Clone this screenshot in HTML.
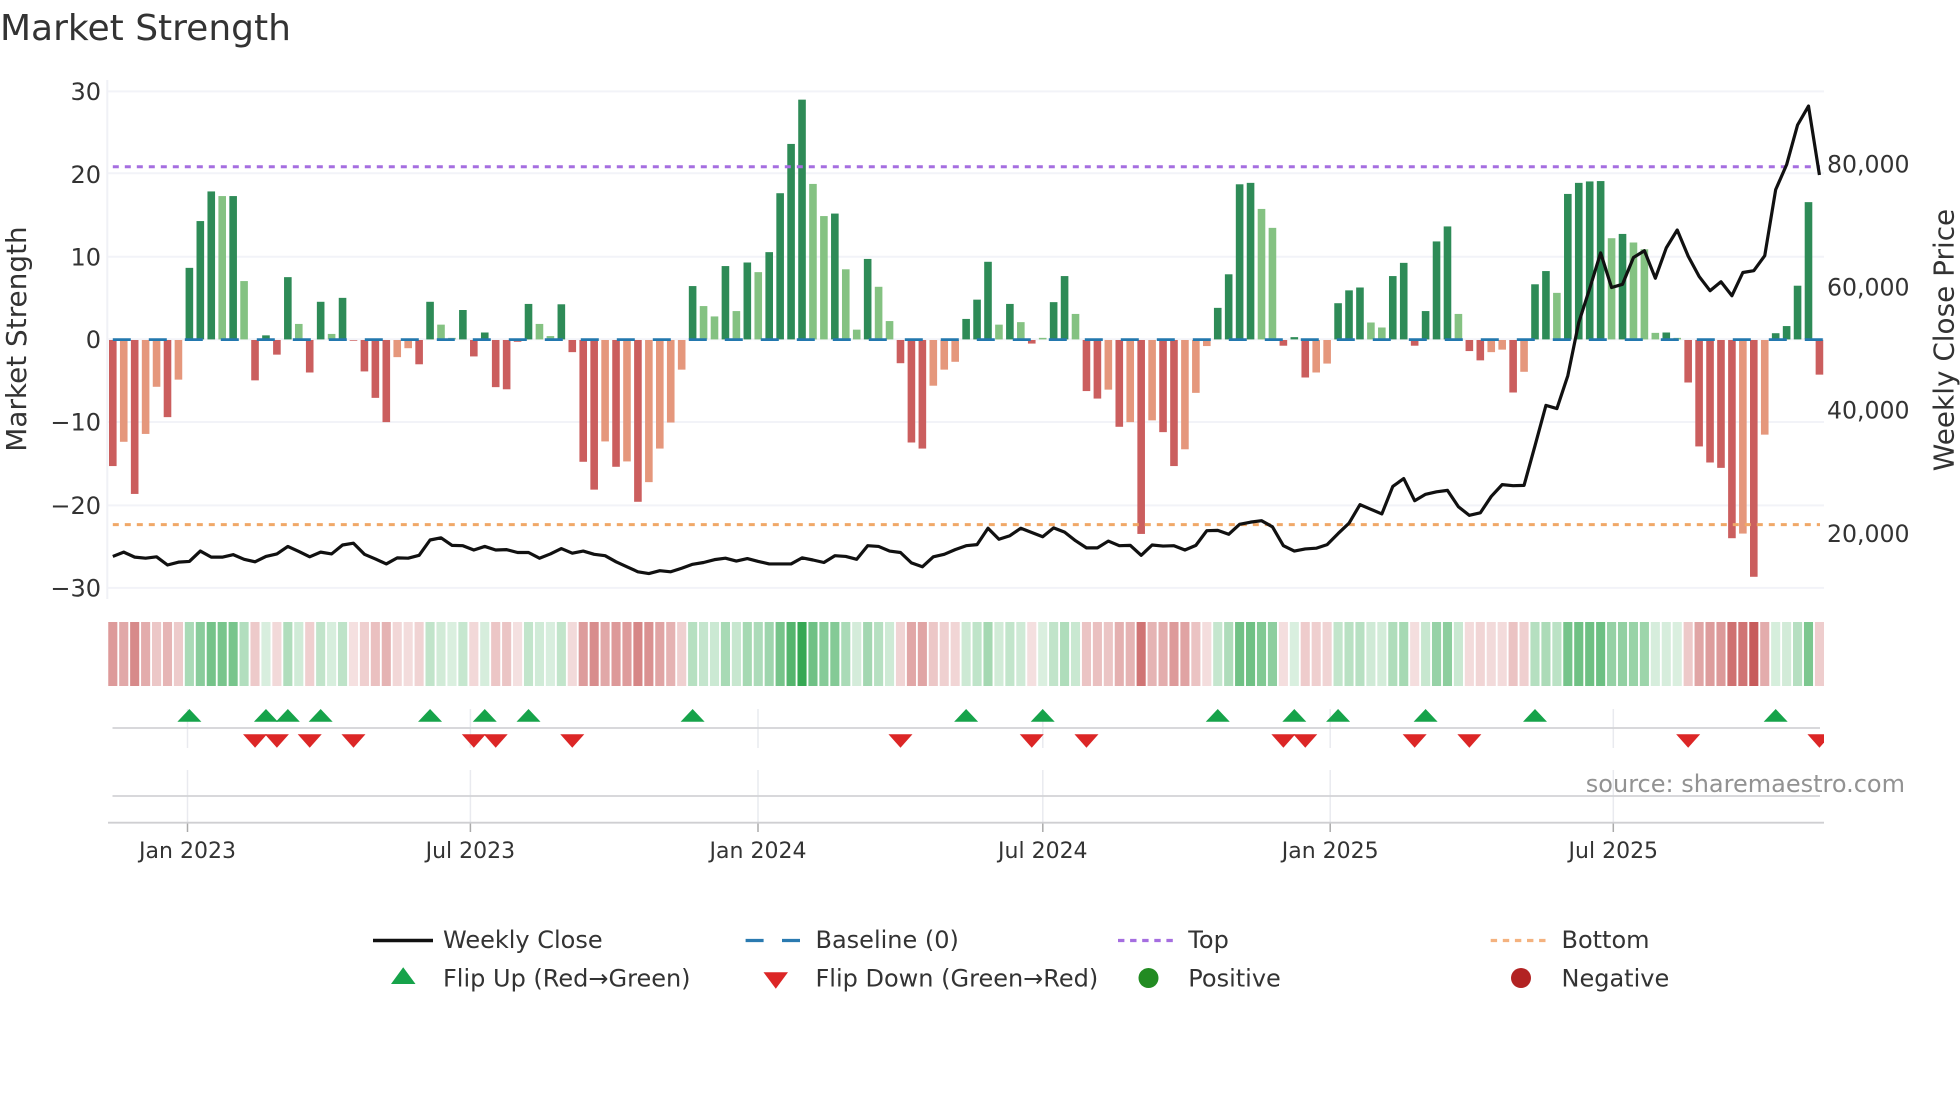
<!DOCTYPE html>
<html lang="en">
<head>
<meta charset="utf-8">
<title>Market Strength</title>
<style>
html,body{margin:0;padding:0;background:#fff;width:1960px;height:1102px;overflow:hidden}
svg{display:block;position:absolute;left:0;top:0}
text{font-family:"DejaVu Sans","Liberation Sans",sans-serif;fill:#333}
</style>
</head>
<body>
<svg id="c" xmlns="http://www.w3.org/2000/svg" width="1960" height="1102" viewBox="0 0 1960 1102">
<rect width="1960" height="1102" fill="#fff"/>
<g id="under"></g>
<g id="strip"></g>
<g id="bars"></g>
<g id="marks"></g>
<path id="price" fill="none" stroke="#111" stroke-width="3.2" stroke-linejoin="round"/>

<text x="0" y="40" font-size="36">Market Strength</text>
<g font-size="24" text-anchor="end">
<text x="101" y="100">30</text>
<text x="101" y="183">20</text>
<text x="101" y="265.5">10</text>
<text x="101" y="348">0</text>
<text x="101" y="430.5">−10</text>
<text x="101" y="514">−20</text>
<text x="101" y="596.5">−30</text>
</g>
<g font-size="23.6">
<text x="1827" y="172.6">80,000</text>
<text x="1827" y="295.6">60,000</text>
<text x="1827" y="418.6">40,000</text>
<text x="1827" y="542">20,000</text>
</g>
<text transform="translate(26,339) rotate(-90)" text-anchor="middle" font-size="27.9">Market Strength</text>
<text transform="translate(1953.5,340) rotate(-90)" text-anchor="middle" font-size="27.9">Weekly Close Price</text>
<g font-size="22" text-anchor="middle">
<text x="187.5" y="858">Jan 2023</text>
<text x="470.4" y="858">Jul 2023</text>
<text x="758" y="858">Jan 2024</text>
<text x="1042.8" y="858">Jul 2024</text>
<text x="1330.2" y="858">Jan 2025</text>
<text x="1613.3" y="858">Jul 2025</text>
</g>
<text x="1905" y="792" text-anchor="end" font-size="24" style="fill:#929292">source: sharemaestro.com</text>

<g font-size="24">
<text x="443" y="948">Weekly Close</text>
<text x="815.5" y="948">Baseline (0)</text>
<text x="1188.3" y="948">Top</text>
<text x="1561.5" y="948">Bottom</text>
<text x="443" y="986.5">Flip Up (Red→Green)</text>
<text x="815.5" y="986.5">Flip Down (Green→Red)</text>
<text x="1188.3" y="986.5">Positive</text>
<text x="1561.5" y="986.5">Negative</text>
</g>
<line x1="373" x2="433" y1="940.5" y2="940.5" stroke="#111" stroke-width="3.5"/>
<line x1="745.6" x2="800" y1="940.5" y2="940.5" stroke="#2a7ab0" stroke-width="3.2" stroke-dasharray="18 18.4"/>
<line x1="1118" x2="1174" y1="940.5" y2="940.5" stroke="#a56ee0" stroke-width="3.2" stroke-dasharray="6.4 5.7"/>
<line x1="1490.7" x2="1547" y1="940.5" y2="940.5" stroke="#f4b27f" stroke-width="3.2" stroke-dasharray="6.4 5.7"/>
<polygon points="403.2,967.3 391,984 415.5,984" fill="#16a34a"/>
<polygon points="763.5,972.3 788,972.3 775.8,988.7" fill="#dc2626"/>
<circle cx="1148.5" cy="978" r="10" fill="#228b22"/>
<circle cx="1521" cy="978" r="10" fill="#b22222"/>
</svg>
<script>
(function(){
var NS='http://www.w3.org/2000/svg',X0=112.8,D=10.94;
function el(p,n,a){var e=document.createElementNS(NS,n);for(var k in a)e.setAttribute(k,a[k]);p.appendChild(e);return e}
function gx(i){return X0+D*i}
function zy(z){return 60+z/2.8}
var under=document.getElementById('under'),strip=document.getElementById('strip'),bars=document.getElementById('bars'),marks=document.getElementById('marks');

[91.4,173.2,256.8,339.3,422,505.4,587.9].forEach(function(y){
 el(under,'line',{x1:107,x2:1824,y1:y,y2:y,stroke:'#f2f3f8','stroke-width':2});
});
el(under,'line',{x1:107.3,x2:107.3,y1:80,y2:599,stroke:'#f0f1f6','stroke-width':2});
[187.5,470.4,758,1042.8,1330.2,1613.3].forEach(function(x){
 el(under,'line',{x1:x,x2:x,y1:709,y2:748,stroke:'#e9eaef','stroke-width':1.5});
 el(under,'line',{x1:x,x2:x,y1:770,y2:823,stroke:'#e9eaef','stroke-width':1.5});
 el(under,'line',{x1:x,x2:x,y1:823,y2:832,stroke:'#aaa','stroke-width':1.5});
});
el(under,'line',{x1:112.5,x2:1820,y1:728,y2:728,stroke:'#d2d3d6','stroke-width':1.8});
el(under,'line',{x1:112.5,x2:1820,y1:796,y2:796,stroke:'#d2d3d6','stroke-width':1.8});
el(under,'line',{x1:108,x2:1824,y1:822.7,y2:822.7,stroke:'#cfcfd2','stroke-width':1.8});

var B="R1137 L1069 R1215 L1047 L915 R1000 L895 G582 G451 G368 g381 G381 g619 R897 G771 R825 G608 g739 R875 G677 g767 G666 R786 R872 R946 R1014 L832 L807 R852 G677 g741 g778 G700 R830 G763 R916 R922 R789 G683 g739 g773 G684 R818 R1125 R1203 L1068 R1139 L1124 R1237 L1182 L1088 L1015 L867 G633 g689 g718 G577 g703 G567 g594 G538 G373 G235 G111 g347 g437 G430 g586 g755 G557 g635 g731 R849 R1071 R1088 L912 L867 L845 G725 G671 G565 g741 G683 g734 R794 g778 G678 G605 g711 R927 R948 L923 R1027 L1014 R1327 L1009 R1042 R1137 L1090 L932 L801 G694 G600 G348 G344 g417 g470 R800 G776 R889 L875 L850 G681 G645 G637 g735 g749 G605 G568 R800 G703 G508 G466 g711 R815 R841 L818 L811 R931 L873 G628 G591 g652 G375 G344 G340 G339 g499 G487 g511 g530 g764 G763 g778 R903 R1082 R1127 R1142 R1339 L1326 R1447 L1049 G765 G745 G632 G398 R881".split(' ');
var col={G:'#2e8b57',g:'#84c282',R:'#cb5e5e',L:'#e5977c'};
function mix(c,a){return 'rgb('+c.map(function(v){return Math.round(255-(255-v)*a)}).join(',')+')'}
B.forEach(function(s,i){
 var t=s[0],z=+s.slice(1),x=gx(i),y=zy(z),y0=339.4;
 var pos=(t=='G'||t=='g');
 var top=pos?y:340,h=pos?(y0-y):(y-340);
 if(h>0)el(bars,'rect',{x:(x-3.8).toFixed(2),y:top.toFixed(2),width:7.6,height:h.toFixed(2),fill:col[t]});
 var v=Math.abs(782-z)/2.8/8.275,a=Math.min(1,0.18+0.82*v/29);
 el(strip,'rect',{x:(x-4.55).toFixed(2),y:622,width:9.1,height:64,fill:mix(pos?[53,168,83]:[199,90,90],a)});
});

el(marks,'line',{x1:X0,x2:1824,y1:339.6,y2:339.6,stroke:'#2378ae','stroke-width':2.8,'stroke-dasharray':'18 18'});
el(marks,'line',{x1:X0,x2:1820,y1:166.8,y2:166.8,stroke:'#a56ee0','stroke-width':3,'stroke-dasharray':'6 6'});
el(marks,'line',{x1:X0,x2:1820,y1:524.6,y2:524.6,stroke:'#f0a868','stroke-width':3,'stroke-dasharray':'6 6'});

var up=[7,14,16,19,29,34,38,53,78,85,101,108,112,120,130,152];
var dn=[13,15,18,22,33,35,42,72,84,89,107,109,119,124,144,156];
up.forEach(function(i){var c=gx(i);el(marks,'polygon',{points:c+',709 '+(c-12)+',721.7 '+(c+12)+',721.7',fill:'#16a34a'})});
var cp=el(marks,'clipPath',{id:'cl'});el(cp,'rect',{x:100,y:700,width:1724,height:60});
var dg=el(marks,'g',{'clip-path':'url(#cl)'});
dn.forEach(function(i){var c=gx(i);el(dg,'polygon',{points:(c-12)+',734.3 '+(c+12)+',734.3 '+c+',747.7',fill:'#dc2626'})});

var P=[1390,1378,1392,1395,1391,1414,1406,1404,1375,1392,1392,1385,1398,1405,1390,1383,1362,1376,1391,1378,1383,1358,1353,1384,1397,1411,1394,1395,1387,1344,1338,1359,1360,1372,1362,1372,1371,1379,1379,1395,1383,1368,1381,1375,1384,1388,1405,1419,1433,1438,1430,1433,1423,1412,1407,1399,1395,1403,1396,1404,1411,1411,1411,1394,1400,1407,1388,1390,1398,1360,1362,1375,1379,1408,1419,1391,1384,1371,1360,1357,1311,1342,1332,1311,1323,1335,1310,1322,1346,1366,1366,1347,1360,1359,1387,1358,1361,1360,1372,1359,1318,1317,1328,1300,1294,1290,1307,1360,1375,1369,1367,1357,1326,1297,1245,1258,1271,1194,1172,1234,1216,1209,1205,1251,1275,1268,1222,1189,1192,1191,1080,967,976,884,735,640,540,637,628,553,534,611,526,476,549,606,646,621,660,595,590,548,363,293,182,129,322];
document.getElementById('price').setAttribute('d',P.map(function(z,i){return (i?'L':'M')+gx(i).toFixed(2)+' '+zy(z).toFixed(2)}).join(''));
})();
</script>
</body>
</html>
